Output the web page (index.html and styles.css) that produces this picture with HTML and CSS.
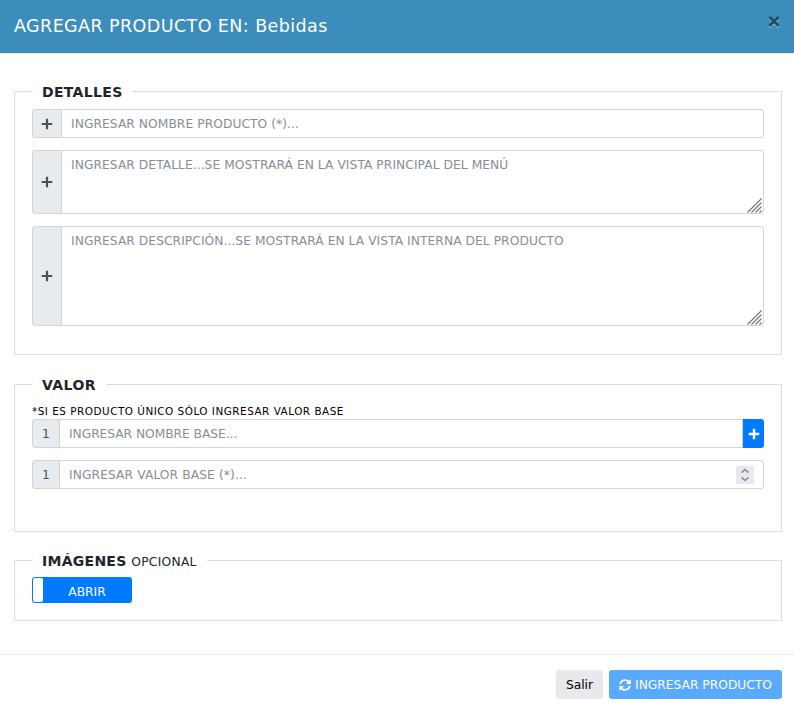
FILE: index.html
```html
<!DOCTYPE html>
<html lang="es">
<head>
<meta charset="utf-8">
<title>Agregar producto</title>
<link rel="stylesheet" href="styles.css">
</head>
<body>
<form class="modal">
  <header class="modal-header">
    <h1 class="title">AGREGAR PRODUCTO EN: Bebidas</h1>
    <button type="button" class="close" aria-label="Cerrar">
      <svg width="14" height="14" viewBox="0 0 14 14"><path class="close-shadow" d="M2.3 4l9.4 9M11.7 4l-9.4 9"/><path class="close-mark" d="M2.3 3l9.4 9M11.7 3l-9.4 9"/></svg>
    </button>
  </header>
  <main class="modal-body">
    <fieldset class="details">
      <legend class="legend-details"><b>DETALLES</b></legend>
      <div class="group">
        <span class="addon"><svg class="plus" width="12" height="12" viewBox="0 0 12 12"><path d="M6 .7v10.6M.7 6h10.6"/></svg></span>
        <input class="field name" type="text" placeholder="INGRESAR NOMBRE PRODUCTO (*)...">
      </div>
      <div class="group">
        <span class="addon"><svg class="plus" width="12" height="12" viewBox="0 0 12 12"><path d="M6 .7v10.6M.7 6h10.6"/></svg></span>
        <textarea class="field area area-short" placeholder="INGRESAR DETALLE...SE MOSTRARÁ EN LA VISTA PRINCIPAL DEL MENÚ"></textarea>
        <svg class="grip" width="15" height="15" viewBox="0 0 15 15"><path d="M.5 14.5l14-14M4.5 14.5l10-10M8.5 14.5l6-6M12.5 14.5l2-2"/></svg>
      </div>
      <div class="group">
        <span class="addon"><svg class="plus" width="12" height="12" viewBox="0 0 12 12"><path d="M6 .7v10.6M.7 6h10.6"/></svg></span>
        <textarea class="field area area-tall" placeholder="INGRESAR DESCRIPCIÓN...SE MOSTRARÁ EN LA VISTA INTERNA DEL PRODUCTO"></textarea>
        <svg class="grip" width="15" height="15" viewBox="0 0 15 15"><path d="M.5 14.5l14-14M4.5 14.5l10-10M8.5 14.5l6-6M12.5 14.5l2-2"/></svg>
      </div>
    </fieldset>
    <fieldset class="value">
      <legend class="legend-value"><b>VALOR</b></legend>
      <p class="hint">*SI ES PRODUCTO ÚNICO SÓLO INGRESAR VALOR BASE</p>
      <div class="group">
        <span class="addon number">1</span>
        <input class="field middle base-name" type="text" placeholder="INGRESAR NOMBRE BASE...">
        <button type="button" class="add" aria-label="Agregar"><svg class="plus" width="12" height="12" viewBox="0 0 12 12"><path d="M6 .7v10.6M.7 6h10.6"/></svg></button>
      </div>
      <div class="group">
        <span class="addon number">1</span>
        <input class="field base-value" type="text" inputmode="numeric" placeholder="INGRESAR VALOR BASE (*)...">
        <span class="spinner"><svg width="18" height="18" viewBox="0 0 18 18"><path d="M5.5 6.6L9 3.6l3.5 3M5.5 11.4l3.5 3 3.5-3"/></svg></span>
      </div>
    </fieldset>
    <fieldset class="images">
      <legend class="legend-images"><b>IMÁGENES</b> <span class="optional">OPCIONAL</span></legend>
      <div class="toggle"><span class="handle"></span><span class="toggle-label">ABRIR</span></div>
    </fieldset>
  </main>
  <footer class="modal-footer">
    <button type="button" class="button exit"><span>Salir</span></button>
    <button type="button" class="button submit">
      <svg width="12" height="12" viewBox="0 0 512 512"><path d="M370.72 133.28C339.458 104.008 298.888 87.962 255.848 88c-77.458.068-144.328 53.178-162.791 126.85-1.344 5.363-6.122 9.15-11.651 9.15H24.103c-7.498 0-13.194-6.807-11.807-14.176C33.933 94.924 134.813 8 256 8c66.448 0 126.791 26.136 171.315 68.685L463.03 40.97C478.149 25.851 504 36.559 504 57.941V192c0 13.255-10.745 24-24 24H345.941c-21.382 0-32.09-25.851-16.971-40.971l41.75-41.749zM32 296h134.059c21.382 0 32.09 25.851 16.971 40.971l-41.75 41.75c31.262 29.273 71.835 45.319 114.876 45.28 77.418-.07 144.315-53.144 162.787-126.849 1.344-5.363 6.122-9.15 11.651-9.15h57.304c7.498 0 13.194 6.807 11.807 14.176C478.067 417.076 377.187 504 256 504c-66.448 0-126.791-26.136-171.315-68.685L48.97 471.03C33.851 486.149 8 475.441 8 454.059V320c0-13.255 10.745-24 24-24z"/></svg>
      <span class="submit-label">INGRESAR PRODUCTO</span>
    </button>
  </footer>
</form>
</body>
</html>
```
FILE: styles.css
```css
* { box-sizing: border-box; }
body {
  margin: 0;
  background: #fff;
  color: #212529;
  font-family: Verdana, "DejaVu Sans", sans-serif;
  font-size: 12.25px;
}
button, input, textarea { font: inherit; margin: 0; }
svg { display: block; fill: none; }
.modal { display: flex; flex-direction: column; height: 713px; }
.modal-header {
  display: flex;
  justify-content: space-between;
  height: 54px;
  padding: 14px 13px 0 14px;
  background: #3c8dbc;
  border-bottom: 1px solid #e9ecef;
}
.title { margin: 0; color: #fff; font-size: 17.5px; font-weight: 400; line-height: 24px; letter-spacing: .42px; white-space: nowrap; }
.close { width: 14px; height: 14px; padding: 0; border: 0; background: none; }
.close-mark { stroke: #1e4a62; stroke-width: 2.5; }
.close-shadow { stroke: #9ac5de; stroke-width: 2.5; }
.modal-body { flex: 1; padding: 26px 12px 0 14px; }
fieldset { min-width: 0; margin: 0; padding: 0 17px; border: 1px solid #dcdcde; }
legend { height: 23px; padding: 0 10px; font-size: 14px; line-height: 24px; white-space: nowrap; }
.details { height: 275px; margin-bottom: 18px; }
.value { height: 159px; margin-bottom: 17px; }
.images { height: 72px; }
.legend-details { width: 100px; letter-spacing: .32px; }
.legend-value { width: 74px; letter-spacing: .45px; }
.legend-images { width: 175px; letter-spacing: .27px; }
.optional { font-size: 12.25px; }
.group { position: relative; display: flex; margin-bottom: 12px; }
.details .group:first-of-type { margin-top: 6px; }
.addon {
  display: flex;
  align-items: center;
  justify-content: center;
  width: 30px;
  background: #e9ecef;
  border: 1px solid #ced4da;
  border-radius: 3px 0 0 3px;
  color: #495057;
}
.number { width: 28px; }
.plus { stroke: #495057; stroke-width: 2.2; }
.field {
  flex: 1;
  min-width: 0;
  height: 29px;
  margin-left: -1px;
  padding: 4px 9px;
  border: 1px solid #ced4da;
  border-radius: 0 3px 3px 0;
  background: #fff;
  line-height: 19px;
  letter-spacing: .06px;
  resize: none;
  overflow: hidden;
}
.field::placeholder { color: #868e96; opacity: 1; }
.middle { border-radius: 0; }
.base-name { letter-spacing: -.04px; }
.base-value { letter-spacing: .1px; }
.area { padding-top: 5px; }
.area-short { height: 64px; }
.area-tall { height: 100px; }
.grip { position: absolute; right: 2px; bottom: 1px; stroke: #777; stroke-width: 1.2; }
.hint { margin: 0; padding-top: 8px; color: #000; font-size: 10.4px; line-height: 15px; letter-spacing: .52px; white-space: nowrap; }
.add { display: grid; place-items: center; width: 21px; padding: 0; border: 0; border-radius: 0 3px 3px 0; background: #007bff; }
.add .plus { stroke: #fff; stroke-width: 2.4; }
.spinner { position: absolute; right: 10px; top: 6px; background: #e9e9ed; }
.spinner svg { stroke: #8f8f9d; stroke-width: 1.6; }
.toggle { display: flex; width: 100px; height: 26px; margin-top: 5px; padding: 1px; border-radius: 3px; background: #007bff; color: #fff; }
.handle { width: 10px; border-radius: 2px; background: #fff; }
.toggle-label { flex: 1; text-align: center; line-height: 28px; }
.modal-footer { display: flex; justify-content: flex-end; gap: 6px; height: 59px; padding: 15px 12px 0; border-top: 1px solid #e9ecef; }
.button { display: flex; align-items: center; justify-content: center; height: 29px; padding: 0; border: 0; border-radius: 3px; white-space: nowrap; }
.exit { width: 47px; background: #e9e9ed; color: #000; }
.submit { width: 173px; gap: 4px; background: #59a9ff; color: #fff; }
.submit svg { fill: #fff; }
```
